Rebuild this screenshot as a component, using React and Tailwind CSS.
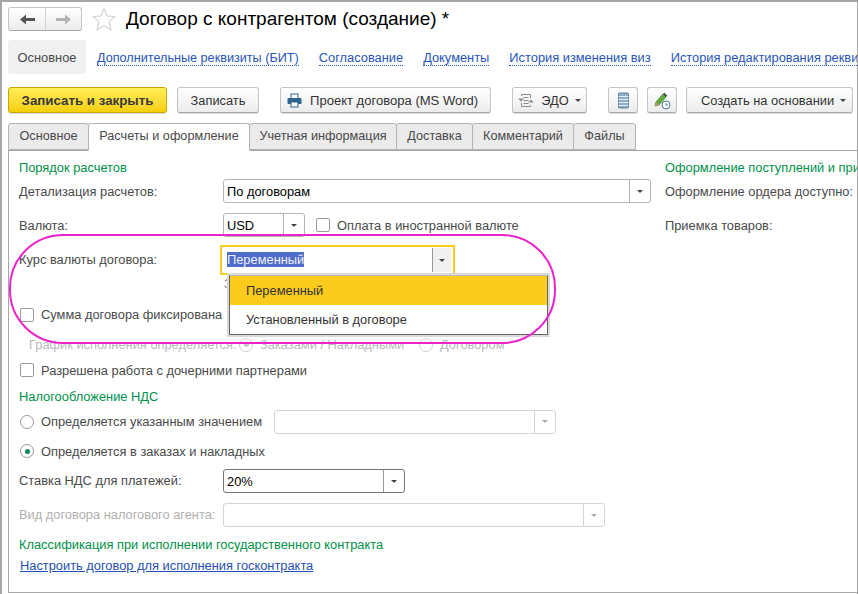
const FONT = "font-['Liberation_Sans',Arial,sans-serif]";

function Caret({ className = 'border-t-[#444]' }) {
  return <span className={`block w-0 h-0 border-x-[3px] border-x-transparent border-t-[3px] ${className}`} />;
}

function Btn({ className = '', children }) {
  return (
    <div className={`h-[26px] shrink-0 flex items-center justify-center rounded-[3px] border border-[#c4c4c4] border-b-[#a8a8a8] bg-linear-to-b from-white to-[#ececec] shadow-[0_1px_0_#d8d8d8] text-[#333] pt-px ${className}`}>
      {children}
    </div>
  );
}

function Field({ className = '', value, disabled, dark }) {
  return (
    <div className={`h-[24px] shrink-0 flex items-center rounded-[3px] border bg-white ${dark ? 'border-[#777]' : disabled ? 'border-[#d4d4d4]' : 'border-[#b4b4b4]'} ${className}`}>
      <span className="flex-1 pl-[3px] pt-px text-black truncate">{value}</span>
      <span className={`w-[21px] h-full flex items-center justify-center border-l ${dark ? 'border-[#999]' : disabled ? 'border-[#d4d4d4]' : 'border-[#b4b4b4]'}`}>
        <Caret className={disabled ? 'border-t-[#aaa]' : 'border-t-[#444]'} />
      </span>
    </div>
  );
}

function Check({ label }) {
  return (
    <div className="flex items-center ml-px">
      <span className="w-[14px] h-[14px] rounded-[2px] border border-[#9a9a9a] bg-white mr-[7px] shrink-0" />
      <span>{label}</span>
    </div>
  );
}

function Radio({ label, on, muted }) {
  return (
    <div className="flex items-center ml-px">
      <span className={`w-[14px] h-[14px] rounded-full border flex items-center justify-center bg-white mr-[7px] shrink-0 ${muted ? 'border-[#d0d0d0]' : 'border-[#9a9a9a]'}`}>
        {on && <span className={`w-[5px] h-[5px] rounded-full ${muted ? 'bg-[#c8c8c8]' : 'bg-[#0f8a5a]'}`} />}
      </span>
      <span>{label}</span>
    </div>
  );
}

function Section({ className = '', children }) {
  return <div className={`text-[#00904a] leading-[16px] ${className}`}>{children}</div>;
}

const links = [
  ['Дополнительные реквизиты (БИТ)', 'ml-[11px] text-[12.65px]'],
  ['Согласование', 'ml-[20px]'],
  ['Документы', 'ml-[20px]'],
  ['История изменения виз', 'ml-[20px]'],
  ['История редактирования реквизитов', 'ml-[20px]'],
];

const tabs = [
  ['Основное', 'w-[81px]'],
  ['Расчеты и оформление', 'w-[162px]'],
  ['Учетная информация', 'w-[148px]'],
  ['Доставка', 'w-[77px]'],
  ['Комментарий', 'w-[102px]'],
  ['Файлы', 'w-[63px]'],
];

export default function App() {
  return (
    <div className={`${FONT} relative w-[858px] h-[594px] overflow-hidden bg-white text-[12.85px] text-[#4a4a4a] border-t-2 border-l-2 border-r border-[#a6a6a6]`}>
      {/* title */}
      <div className="h-[34px] pl-[6px] flex items-center">
        <div className="w-[74px] h-[24px] flex rounded-[3px] border border-[#c4c4c4] border-b-[#a8a8a8] bg-linear-to-b from-white to-[#ececec]">
          <span className="w-[37px] flex items-center justify-center border-r border-[#d4d4d4]">
            <svg width="15" height="11" viewBox="0 0 15 11"><path d="M0 5.5 L6 .5 V4 H15 V7 H6 V10.5 Z" fill="#555" /></svg>
          </span>
          <span className="flex-1 flex items-center justify-center">
            <svg width="15" height="11" viewBox="0 0 15 11"><path d="M15 5.5 L9 .5 V4 H0 V7 H9 V10.5 Z" fill="#b3b3b3" /></svg>
          </span>
        </div>
        <svg className="ml-[10px]" width="24" height="24" viewBox="0 0 24 24"><path d="M12 1.5 L15 9 L23 9.5 L17 14.8 L19 23 L12 18.6 L5 23 L7 14.8 L1 9.5 L9 9 Z" fill="white" stroke="#c9c9c9" strokeWidth="1" /></svg>
        <span className="ml-[10px] text-[19px] text-black">Договор с контрагентом (создание) *</span>
      </div>

      {/* sections */}
      <div className="mt-[4px] ml-[6px] h-[34px] flex items-center whitespace-nowrap">
        <div className="w-[78px] h-full shrink-0 flex items-center justify-center rounded-[3px] bg-[#f0f0f0] pt-[2px]">Основное</div>
        {links.map(([text, cls]) => (
          <span key={text} className={`${cls} mt-[3px] shrink-0 text-[#2855b8] border-b border-dotted border-[#2855b8] leading-[14px]`}>{text}</span>
        ))}
      </div>

      {/* command bar */}
      <div className="mt-[13px] ml-[6px] flex items-center whitespace-nowrap">
        <div className="w-[159px] h-[26px] shrink-0 flex items-center justify-center rounded-[3px] border border-[#c8a800] bg-linear-to-b from-[#ffee55] to-[#f5cf00] font-bold text-[13.3px] text-[#3a3a3a] shadow-[0_1px_0_#d8d8d8] pt-px">Записать и закрыть</div>
        <Btn className="w-[82px] ml-[10px]">Записать</Btn>
        <Btn className="w-[211px] ml-[21px] justify-start! pl-[6px]">
          <svg className="mr-[8px]" width="15" height="15" viewBox="0 0 15 15">
            <rect x="4" y="1" width="7" height="5" fill="#fff" stroke="#2f658d" />
            <rect x="0.5" y="5" width="14" height="6" rx="1" fill="#2f658d" />
            <rect x="4" y="9" width="7" height="5" fill="#fff" stroke="#2f658d" />
          </svg>
          <span className="text-[13.05px]">Проект договора (MS Word)</span>
        </Btn>
        <Btn className="w-[75px] ml-[21px]">
          <svg className="mr-[7px]" width="16" height="15" viewBox="0 0 16 15" fill="none" stroke="#8f8f8f">
            <path d="M3.5 3 V1.5 H12.5 V5 M3.5 10 V13.5 H12.5 V12 M5.5 4.5 H10.5 M5.5 7.5 H10.5 M5.5 10.5 H10.5" />
            <path d="M0 5.5 L3 8.5 L6 5.5 Z M10 9.5 L13 6.5 L16 9.5 Z" fill="#8f8f8f" stroke="none" />
          </svg>
          ЭДО
          <Caret className="border-t-[#444] ml-[6px]" />
        </Btn>
        <Btn className="w-[30px] ml-[21px]">
          <svg width="11" height="17" viewBox="0 0 11 17">
            <rect x=".5" y="1" width="10" height="15" rx="1" fill="#8fb0c8" stroke="#5f8199" />
            <path d="M.5 4.5H10.5M.5 7.5H10.5M.5 10.5H10.5M.5 13.5H10.5" stroke="#dfe9f0" />
          </svg>
        </Btn>
        <Btn className="w-[30px] ml-[9px]">
          <svg width="18" height="18" viewBox="0 0 18 18">
            <path d="M2 14 L3 10 L10 2 L13 5 L6 13 Z" fill="#5fae3c" stroke="#3f7d28" strokeWidth=".7" />
            <path d="M10 2 L11.3 .7 L14.3 3.7 L13 5 Z" fill="#444" />
            <path d="M2 14 L3 10 L6 13 Z" fill="#c79a62" />
            <circle cx="13" cy="13" r="4" fill="#fff" stroke="#4a7aa0" />
            <path d="M13 11 V13 H15" stroke="#4a7aa0" fill="none" />
          </svg>
        </Btn>
        <Btn className="w-[167px] ml-[9px] pl-[8px]">
          Создать на основании
          <Caret className="border-t-[#444] ml-[6px]" />
        </Btn>
      </div>

      {/* tabs */}
      <div className="mt-[10px] ml-[6px] flex h-[27px] relative z-10 whitespace-nowrap text-[12.7px]">
        {tabs.map(([t, w], i) => (
          <div key={t} className={`${w} shrink-0 flex items-center justify-center rounded-t-[3px] border border-[#b4b4b4] -ml-px first:ml-0 ${i === 1 ? 'bg-white border-b-white h-[28px]' : 'bg-[#ebebeb]'}`}>{t}</div>
        ))}
      </div>

      {/* panel */}
      <div className="ml-[6px] h-[443px] border-t border-l border-b border-[#a6a6a6] flex overflow-hidden whitespace-nowrap">
        <div className="w-[649px] shrink-0 pl-[10px] pt-[9px]">
          <Section>Порядок расчетов</Section>
          <div className="flex items-center mt-[3px]">
            <span className="w-[204px] pt-px">Детализация расчетов:</span>
            <Field className="w-[428px]" value="По договорам" />
          </div>
          <div className="flex items-center mt-[10px]">
            <span className="w-[204px] pt-px">Валюта:</span>
            <Field className="w-[82px]" value="USD" />
            <span className="ml-[10px] pt-px"><Check label="Оплата в иностранной валюте" /></span>
          </div>
          <div className="flex items-center mt-[9px] h-[28px]">
            <span className="w-[201px]">Курс валюты договора:</span>
            <div className="w-[235px] h-[30px] shrink-0 flex items-center border-2 border-[#fbcb1e] pl-[5px] pr-[2px]">
              <span className="flex-1 text-black"><span className="bg-[#4e6cc8] text-[#eef]">Переменный</span></span>
              <span className="w-[19px] h-[24px] flex items-center justify-center border-l border-[#999] bg-[#f0f0f0]"><Caret /></span>
            </div>
          </div>
          {/* hint under the field, mostly hidden by the open list */}
          <div className="h-[16px] mt-[2px] pl-[205px] leading-[16px] text-[#777]">З</div>
          <div className="mt-[13px]"><Check label="Сумма договора фиксирована" /></div>
          <div className="flex items-center mt-[11px] ml-[10px] text-[#b9b9b9]">
            <span className="w-[209px]">График исполнения определяется:</span>
            <span className="w-[180px]"><Radio muted on label="Заказами / Накладными" /></span>
            <Radio muted label="Договором" />
          </div>
          <div className="mt-[6px]"><Check label="Разрешена работа с дочерними партнерами" /></div>
          <Section className="mt-[9px]">Налогообложение НДС</Section>
          <div className="flex items-center mt-[5px]">
            <span className="w-[255px]"><Radio label="Определяется указанным значением" /></span>
            <Field disabled className="w-[282px]" />
          </div>
          <div className="mt-[8px]"><Radio on label="Определяется в заказах и накладных" /></div>
          <div className="flex items-center mt-[8px]">
            <span className="w-[204px]">Ставка НДС для платежей:</span>
            <Field dark className="w-[182px]" value="20%" />
          </div>
          <div className="flex items-center mt-[10px] text-[#b0b0b0]">
            <span className="w-[204px]">Вид договора налогового агента:</span>
            <Field disabled className="w-[382px]" />
          </div>
          <Section className="mt-[10px]">Классификация при исполнении государственного контракта</Section>
          <div className="mt-[5px] ml-px text-[#1f4fb0] underline leading-[16px]">Настроить договор для исполнения госконтракта</div>
        </div>
        <div className="pl-[7px] pt-[9px]">
          <Section>Оформление поступлений и приемки</Section>
          <div className="mt-[8px] leading-[16px]">Оформление ордера доступно:</div>
          <div className="mt-[18px] leading-[16px]">Приемка товаров:</div>
        </div>
      </div>

      {/* open dropdown list */}
      <div className="absolute left-[227px] top-[273px] w-[319px] border border-[#666] border-t-[#bbb] bg-white shadow-[0_0_0_2px_#d9d9d9] text-[#333]">
        <div className="h-[29px] pl-[16px] flex items-center bg-[#fbcb1e]">Переменный</div>
        <div className="h-[29px] pl-[16px] flex items-center">Установленный в договоре</div>
      </div>

      {/* annotation oval */}
      <div className="absolute left-[7px] top-[232px] w-[547px] h-[110px] rounded-[54px] border-2 border-[#ee22cc] pointer-events-none" />
    </div>
  );
}
